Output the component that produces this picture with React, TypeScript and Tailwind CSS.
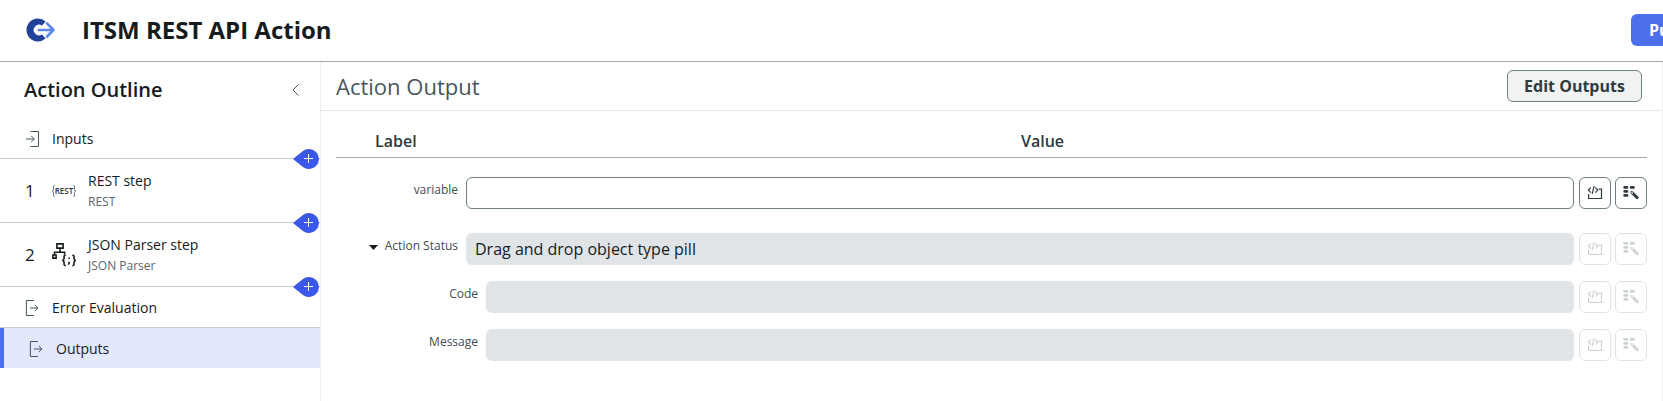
import React from 'react';

function Logo() {
  return (
    <svg className="shrink-0" width="30" height="24" viewBox="0 0 30 24" fill="none">
      <path d="M19.6 3.4A11.5 11.5 0 1 0 19.6 20.6L16 16.4A5.3 5.3 0 1 1 16 7.6Z" fill="#22429a" />
      <path d="M12.6 12H27" stroke="#fff" strokeWidth="5" />
      <path d="M12.8 12H27" stroke="#5b88f0" strokeWidth="2.7" strokeLinecap="round" />
      <path d="M21 5.4L27.4 12L21 18.6" stroke="#5b88f0" strokeWidth="2.7" strokeLinecap="round" strokeLinejoin="round" />
    </svg>
  );
}

function InIcon() {
  return (
    <svg className="shrink-0" width="14" height="16" viewBox="0 0 14 16" fill="none" stroke="#44565c">
      <path d="M4.5 .5H12.5V15.5H4.5" />
      <path d="M0 8H8.3M5.2 4.9L8.3 8L5.2 11.1" />
    </svg>
  );
}

function OutIcon() {
  return (
    <svg className="shrink-0" width="14" height="16" viewBox="0 0 14 16" fill="none" stroke="#44565c">
      <path d="M8.9 .5H1.4V15.5H8.9" />
      <path d="M5 8H12.9M9.8 4.9L12.9 8L9.8 11.1" />
    </svg>
  );
}

function RestIcon() {
  return (
    <svg className="shrink-0" width="24" height="24" viewBox="0 0 24 24" fill="none" stroke="#5a6170" strokeWidth="1">
      <path d="M2.6 6.5C1.4 6.5 1.5 7.5 1.5 9.2C1.5 11 1.3 11.6 .4 12C1.3 12.4 1.5 13 1.5 14.8C1.5 16.5 1.4 17.5 2.6 17.5" />
      <path d="M21.4 6.5C22.6 6.5 22.5 7.5 22.5 9.2C22.5 11 22.7 11.6 23.6 12C22.7 12.4 22.5 13 22.5 14.8C22.5 16.5 22.6 17.5 21.4 17.5" />
      <text x="12" y="15" textAnchor="middle" textLength="18.6" lengthAdjust="spacingAndGlyphs" fill="#2b3244" stroke="none" className="font-['Open_Sans',sans-serif] text-[8.6px] font-semibold">
        REST
      </text>
    </svg>
  );
}

function JsonIcon() {
  return (
    <svg className="shrink-0" width="24" height="24" viewBox="0 0 24 24" fill="none" stroke="#161b1d" strokeWidth="1.6">
      <path d="M4.9 .9H11.1V5.1H4.9Z" />
      <path d="M8 5V9M2.5 12V9.2H12.6V11.5" />
      <path d="M.9 12H4.1V15.1H.9Z" />
      <path d="M13.8 12.2C11.6 12.2 12.1 13.7 12.1 15.2C12.1 16.7 11.7 17.2 10.3 17.4C11.7 17.6 12.1 18.1 12.1 19.6C12.1 21.3 11.6 22.6 13.8 22.6" />
      <path d="M20.3 12.2C22.5 12.2 22 13.7 22 15.2C22 16.7 22.4 17.2 23.8 17.4C22.4 17.6 22 18.1 22 19.6C22 21.3 22.5 22.6 20.3 22.6" />
      <path d="M16.4 15.3H17.9M17.2 18.7V19.8L16.2 21.6" />
    </svg>
  );
}

function AddPill() {
  return (
    <button className="absolute -bottom-[11px] right-[1px] z-10 h-5 w-[26px]">
      <svg width="26" height="20" viewBox="0 0 26 20">
        <path d="M0 10L9.6 2.3A10 10 0 1 1 9.6 17.7Z" fill="#3a57e8" />
        <path d="M11 9.5H20M15.5 5V14" stroke="#fff" />
      </svg>
    </button>
  );
}

function Step({ index, icon, title, kind }: { index: number; icon: React.ReactNode; title: string; kind: string }) {
  return (
    <div className="relative flex h-16 items-center border-b border-[#c8d0d2]">
      <span className="w-[52px] pl-[25px] text-[17px]">{index}</span>
      {icon}
      <div className="ml-[12px] pb-px">
        <div className="text-sm leading-[22px]">{title}</div>
        <div className="text-xs leading-[19px] text-[#59666b]">{kind}</div>
      </div>
      <AddPill />
    </div>
  );
}

function CodeIcon() {
  return (
    <svg width="16" height="16" viewBox="0 0 16 16" fill="none" stroke="currentColor" strokeWidth="1.2">
      <path d="M1.6 9V13.5H14.5V4.2H11.8" />
      <path d="M3.8 2.6L1.4 5.1L3.8 7.6M8.4 2.6L10.8 5.1L8.4 7.6M7.2 1L5.2 8.8" />
    </svg>
  );
}

function WandIcon() {
  return (
    <svg width="16" height="16" viewBox="0 0 16 16" fill="none" stroke="currentColor" strokeLinecap="round">
      <path d="M1.6 2.4H4M8.1 2.4H10.5M1.6 6.4H4M1.6 10.4H4" strokeWidth="2.6" />
      <path d="M9.9 8.5L14.2 12.6" strokeWidth="2.9" />
      <path d="M8.6 7.2L9.4 8" strokeWidth="2.6" />
      <path d="M8.7 7.3L9.5 8.1" stroke="#fff" strokeWidth="1.1" />
    </svg>
  );
}

function Row({ label, nested, disabled, text, caret }: { label: string; nested?: boolean; disabled?: boolean; text?: string; caret?: boolean }) {
  const tool = disabled ? 'border-[#dfe3e4] text-[#cdd2d3]' : 'border-[#6f7f85] text-[#2d3b40]';
  return (
    <div className="flex h-8">
      <div className={`flex h-[26px] shrink-0 items-center justify-end pr-2 text-xs text-[#3f4c51] ${nested ? 'w-[150px]' : 'w-[130px]'}`}>
        {caret && (
          <svg className="mr-[7px] mt-[3px]" width="9" height="5" viewBox="0 0 9 5">
            <path d="M0 0H9L4.5 5Z" fill="#161b1d" />
          </svg>
        )}
        {label}
      </div>
      <div className={`flex flex-1 items-center rounded-md pl-[9px] text-base ${disabled ? 'bg-[#e0e4e7]' : 'border border-[#6f7f85] bg-white'}`}>
        {text}
      </div>
      <button className={`ml-[5px] flex w-8 items-center justify-center rounded-md border ${tool}`}>
        <CodeIcon />
      </button>
      <button className={`ml-1 flex w-8 items-center justify-center rounded-md border ${tool}`}>
        <WandIcon />
      </button>
    </div>
  );
}

export default function App() {
  return (
    <div className="flex h-[401px] w-full flex-col overflow-hidden bg-white font-['Open_Sans',sans-serif] text-[#161b1d]">
      <header className="flex h-[62px] shrink-0 items-center border-b border-[#a0aaad] pb-[2px] pl-[26px]">
        <Logo />
        <h1 className="ml-[26px] text-2xl font-bold">ITSM REST API Action</h1>
        <button className="ml-auto -mr-[50px] h-8 w-[82px] shrink-0 rounded-md bg-[#4c6fec] pl-[18px] text-left text-base font-bold text-white">Publish</button>
      </header>
      <div className="flex min-h-0 flex-1">
        <aside className="w-[321px] shrink-0 border-r border-[#eceeef]">
          <div className="flex h-[57px] items-center justify-between pb-[2px] pl-6 pr-[21px]">
            <h2 className="text-xl font-semibold">Action Outline</h2>
            <svg width="7" height="12" viewBox="0 0 7 12" fill="none" stroke="#44565c">
              <path d="M6.5 .5L1 6L6.5 11.5" />
            </svg>
          </div>
          <div className="relative flex h-10 items-center border-b border-[#c8d0d2] pl-[26px] text-sm">
            <InIcon />
            <span className="ml-3">Inputs</span>
            <AddPill />
          </div>
          <Step index={1} icon={<RestIcon />} title="REST step" kind="REST" />
          <Step index={2} icon={<JsonIcon />} title="JSON Parser step" kind="JSON Parser" />
          <div className="flex h-[41px] items-center border-b border-[#c8d0d2] pl-[25px] pt-[2px] text-sm">
            <OutIcon />
            <span className="ml-[13px]">Error Evaluation</span>
          </div>
          <div className="flex h-10 items-center border-l-4 border-[#4c6fec] bg-[#e4e8fc] pl-[25px] pt-[2px] text-sm">
            <OutIcon />
            <span className="ml-[13px]">Outputs</span>
          </div>
        </aside>
        <main className="flex-1 border-r border-[#eceeef]">
          <div className="flex h-[49px] items-center justify-between border-b border-[#e4e7e8] pl-[15px] pr-5">
            <h2 className="text-[22px] text-[#4a565b]">Action Output</h2>
            <button className="h-8 w-[135px] rounded-md border border-[#6f7f85] bg-[#f1f3f3] text-base font-bold text-[#2d3b40]">Edit Outputs</button>
          </div>
          <div className="pl-[15px] pr-[15px] pt-[13px]">
            <div className="flex h-[34px] items-end border-b border-[#a0aaad] pb-1 text-base font-semibold text-[#2d3b40]">
              <div className="w-[102px] pl-[39px]">Label</div>
              <div className="flex-1 text-center">Value</div>
            </div>
            <div className="pt-[19px]">
              <Row label="variable" />
            </div>
            <div className="pt-6">
              <Row label="Action Status" disabled caret text="Drag and drop object type pill" />
            </div>
            <div className="flex flex-col gap-4 pt-4">
              <Row label="Code" nested disabled />
              <Row label="Message" nested disabled />
            </div>
          </div>
        </main>
      </div>
    </div>
  );
}
